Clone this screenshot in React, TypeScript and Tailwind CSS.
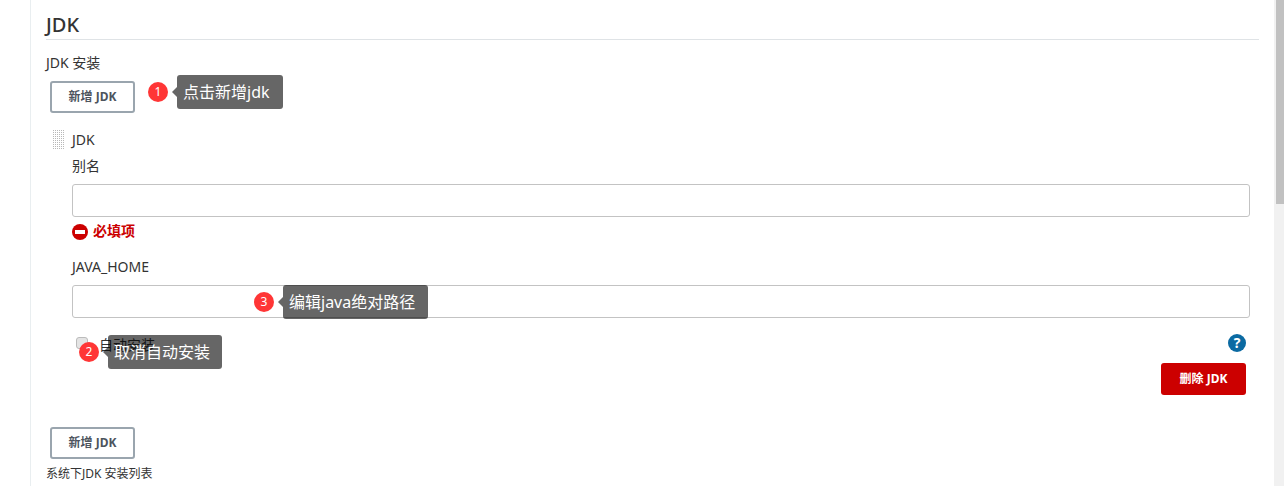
const font = { fontFamily: '"Noto Sans", "Noto Sans CJK SC", sans-serif' }

const AddButton = () => (
  <button className="flex h-8 w-[85px] items-center justify-center rounded-[3px] border-2 border-[#9aa5ae] bg-white text-xs font-bold text-[#4d545d]">
    新增 JDK
  </button>
)

interface TipProps {
  num: number
  text: string
  className: string
  boxClass: string
}

const Tip = ({ num, text, className, boxClass }: TipProps) => (
  <div className={`absolute flex items-center ${className}`}>
    <span className="flex h-5 w-5 items-center justify-center rounded-full bg-[#ff3636] text-xs text-white">
      {num}
    </span>
    <span className="ml-[4px] h-0 w-0 border-y-[5px] border-r-[5px] border-y-transparent border-r-black/60" />
    <span className={`flex h-[34px] items-center rounded-[3px] bg-black/60 pl-[6px] text-base whitespace-nowrap text-white ${boxClass}`}>
      {text}
    </span>
  </div>
)

const DragHandle = () => (
  <div className="grid h-5 w-[11px] grid-cols-[repeat(6,1px)] grid-rows-[repeat(10,1px)] gap-px">
    {Array.from({ length: 60 }).map((_, i) => (
      <span key={i} className="bg-[#b8b8b8]" />
    ))}
  </div>
)

const App = () => {
  return (
    <div className="flex h-[486px] w-[1284px] overflow-hidden bg-white text-sm text-[#333333]" style={font}>
      <div className="w-[30px] shrink-0" />
      <main className="relative flex-1 border-l border-[#e9eef0] pr-[15px] pl-[15px]">
        <h2 className="flex h-[40px] items-end border-b border-[#dfe3e6] text-xl leading-[28px] font-medium text-[#333333]">
          JDK
        </h2>
        <div className="mt-[14px] h-[18px] leading-[18px]">JDK 安装</div>
        <div className="mt-[9px] pl-1">
          <AddButton />
        </div>

        <div className="mt-[17px] flex pl-[7px]">
          <div className="w-[19px] shrink-0">
            <DragHandle />
          </div>
          <div className="flex-1 pr-[8px]">
            <div className="h-5 leading-5">JDK</div>
            <div className="mt-[6px] h-5 leading-5">别名</div>
            <input className="mt-2 block h-[33px] w-[1178px] rounded-[3px] border border-[#c3c3c3] bg-white" />
            <div className="mt-[7px] flex h-4 items-center font-bold text-[#cc0000]">
              <span className="flex h-4 w-4 items-center justify-center rounded-full bg-[#cc0000]">
                <span className="h-[4px] w-[10px] bg-white" />
              </span>
              <span className="mb-[2px] ml-[5px]">必填项</span>
            </div>
            <div className="mt-[17px] h-5 leading-5">JAVA_HOME</div>
            <input className="mt-2 block h-[33px] w-[1178px] rounded-[3px] border border-[#c3c3c3] bg-white" />
            <div className="mt-[19px] flex h-3 w-[1174px] items-center">
              <span className="ml-1 h-3 w-3 rounded-[3px] border border-[#bbbbbb] bg-[#e4e4e4]" />
              <span className="mt-[4px] ml-[11px] whitespace-nowrap">自动安装</span>
              <span className="ml-auto flex h-[18px] w-[18px] items-center justify-center rounded-full bg-[#0b6aa2] text-[14px] font-bold text-white">
                ?
              </span>
            </div>
            <div className="mt-[14px] flex w-[1174px] justify-end">
              <button className="h-8 w-[85px] rounded-[3px] bg-[#cc0000] text-xs font-bold text-white">删除 JDK</button>
            </div>
          </div>
        </div>

        <div className="mt-[32px] pl-1">
          <AddButton />
        </div>
        <div className="mt-[6px] text-xs leading-[18px]">系统下JDK 安装列表</div>

        <Tip num={1} text="点击新增jdk" className="top-[75px] left-[117px]" boxClass="w-[106px]" />
        <Tip num={3} text="编辑java绝对路径" className="top-[285px] left-[223px]" boxClass="w-[145px]" />
        <Tip num={2} text="取消自动安装" className="top-[335px] left-[48px]" boxClass="w-[114px]" />
      </main>
      <aside className="w-[10px] shrink-0 bg-[#f1f1f1] pl-[2px]">
        <div className="h-[204px] bg-[#c1c1c1]" />
      </aside>
    </div>
  )
}

export default App
